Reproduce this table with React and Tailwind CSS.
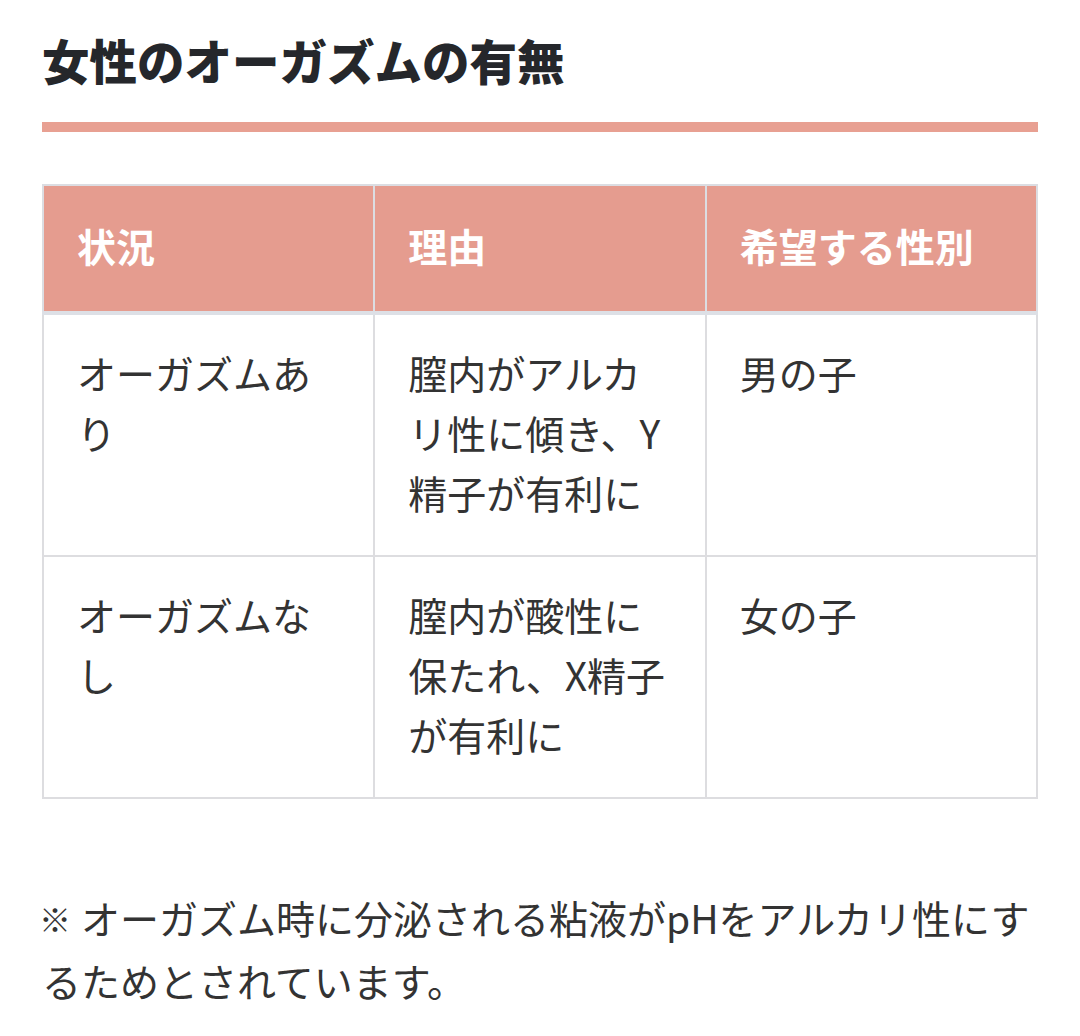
const rows = [
  { a: "オーガズムあり", b: "膣内がアルカリ性に傾き、Y精子が有利に", c: "男の子" },
  { a: "オーガズムなし", b: "膣内が酸性に保たれ、X精子が有利に", c: "女の子" },
];

export default function App() {
  return (
    <div
      className="bg-white px-[42px] text-[#333]"
      style={{ fontFamily: '"Noto Sans CJK JP", "Noto Sans", sans-serif' }}
    >
      {/* TITLE */}
      <h2 className="pt-[24px] text-[47.5px] leading-[72px] font-black text-[#25272b]">
        女性のオーガズムの有無
      </h2>
      <div className="mt-[26px] h-[10px] bg-[#e8a092]" />

      {/* TABLE */}
      <table className="mt-[52px] w-full table-fixed border-collapse text-[39px] leading-[60px]">
        <thead>
          <tr className="bg-[#e59c8f] text-white">
            {["状況", "理由", "希望する性別"].map((h) => (
              <th
                key={h}
                className="border-2 border-b-4 border-[#dcdde2] border-b-[#dde0e6] px-[33px] pt-[29px] pb-[36px] text-left font-bold"
              >
                {h}
              </th>
            ))}
          </tr>
        </thead>
        <tbody>
          {rows.map((r) => (
            <tr key={r.a}>
              <td className="border-2 border-[#dddde0] px-[33px] pt-[27px] pb-[33px] align-top">{r.a}</td>
              <td className="border-2 border-[#dddde0] px-[33px] pt-[27px] pb-[33px] align-top">{r.b}</td>
              <td className="border-2 border-[#dddde0] px-[33px] pt-[27px] pb-[33px] align-top">{r.c}</td>
            </tr>
          ))}
        </tbody>
      </table>

      {/* NOTE */}
      <p className="mt-[88px] text-[39px] leading-[60px] before:relative before:-top-[2px] before:-ml-[3px] before:mr-[10px] before:text-[32px] before:font-bold before:content-['※']">
        オーガズム時に分泌される粘液がpHをアルカリ性にするためとされています。
      </p>
    </div>
  );
}
